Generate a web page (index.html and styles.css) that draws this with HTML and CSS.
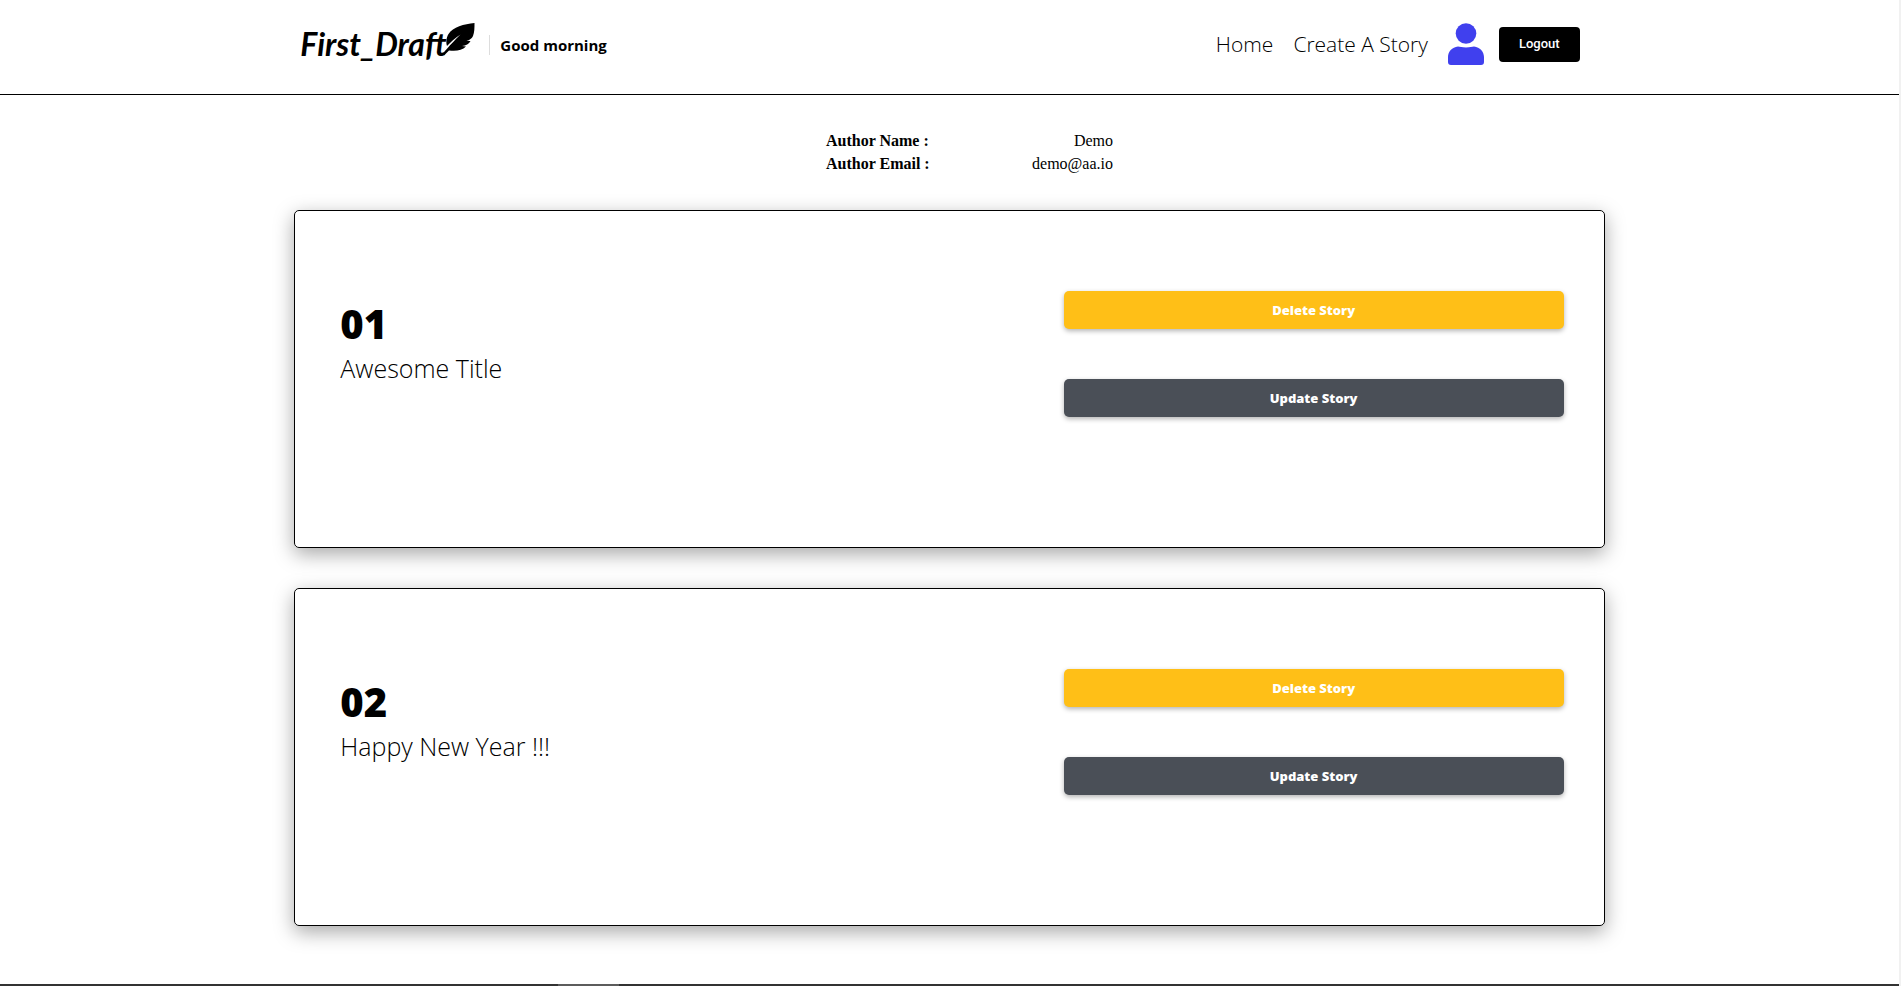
FILE: index.html
```html
<!DOCTYPE html>
<html lang="en">
<head>
  <meta charset="utf-8">
  <meta name="viewport" content="width=device-width, initial-scale=1">
  <title>First_Draft</title>
  <link rel="stylesheet" href="styles.css">
</head>
<body>
  <div class="page">
    <header class="site-header">
      <div class="container bar">
        <div class="brand">
          <a class="logo" href="#"><span class="wordmark">First_Draft</span><svg class="feather" viewBox="0 0 33 33" aria-hidden="true"><path d="M32.500 0C22 1 11 4 6.500 11C4 15 4 20 5 23C9 19 13 15 18.500 11.500C13 17 8 22 0.500 31L2 32.500L7 27.500C14 28.500 20 27.500 24 23.500L20 23C24 22.500 27 21 28.500 18L24.500 18C27.500 17 30 15.500 31 13C32.500 9 32.500 5 32.500 0Z"/></svg></a>
          <span class="greeting">Good morning</span>
        </div>
        <nav class="menu">
          <a class="menu-link" href="#">Home</a>
          <a class="menu-link" href="#">Create A Story</a>
          <a class="profile" href="#" aria-label="Profile"><svg viewBox="0 0 36 42" aria-hidden="true"><circle cx="18" cy="10.500" r="10.300"/><path d="M10 23.500C12 23.500 14 24.500 18 24.500S24 23.500 26 23.500C32 24 36 29 36 34V39Q36 42 33 42H3Q0 42 0 39V34C0 29 4 24 10 23.500Z"/></svg></a>
          <button class="logout" type="button">Logout</button>
        </nav>
      </div>
    </header>
    <main class="container">
      <dl class="author">
        <div class="author-row"><dt>Author Name :</dt><dd>Demo</dd></div>
        <div class="author-row"><dt>Author Email :</dt><dd>demo@aa.io</dd></div>
      </dl>
      <section class="stories">
        <article class="card">
          <div class="story">
            <h2 class="number">01</h2>
            <p class="title">Awesome Title</p>
          </div>
          <div class="actions">
            <button class="btn btn-delete" type="button">Delete Story</button>
            <button class="btn btn-update" type="button">Update Story</button>
          </div>
        </article>
        <article class="card">
          <div class="story">
            <h2 class="number">02</h2>
            <p class="title">Happy New Year !!!</p>
          </div>
          <div class="actions">
            <button class="btn btn-delete" type="button">Delete Story</button>
            <button class="btn btn-update" type="button">Update Story</button>
          </div>
        </article>
      </section>
    </main>
    <div class="edge"></div>
  </div>
</body>
</html>
```
FILE: styles.css
```css
* { box-sizing: border-box; }

body {
  margin: 0;
  background: #fff;
  color: #000;
  font-family: "Open Sans", sans-serif;
}

.page {
  display: flex;
  flex-direction: column;
  min-height: 100vh;
  border-right: 2px solid #f1f1f1;
}

.container {
  width: 69%;
  margin: 0 auto;
}

.site-header { border-bottom: 1px solid #000; }

.bar {
  display: flex;
  justify-content: space-between;
  align-items: center;
  padding: 23px 25px 29px 6px;
}

.brand { display: flex; align-items: center; }

.logo {
  display: flex;
  align-items: flex-start;
  color: #000;
  text-decoration: none;
}

.wordmark {
  width: 142px;
  font: italic 700 32px/42px Lato, sans-serif;
}

.feather { width: 33px; height: 33px; }

.greeting {
  margin: 2px 0 0 14px;
  padding-left: 10px;
  border-left: 1px solid #ddd;
  font-size: 15px;
  font-weight: 700;
  line-height: 20px;
}

.menu { display: flex; align-items: center; }

.menu-link {
  margin-right: 20px;
  color: #000;
  font-size: 21px;
  font-weight: 300;
  line-height: 30px;
  text-decoration: none;
}

.profile { display: flex; margin-right: 15px; }
.profile svg { width: 36px; height: 42px; fill: #4040ee; }

.logout {
  height: 35px;
  padding: 0 20px;
  border: 0;
  border-radius: 4px;
  background: #000;
  color: #fff;
  font: 500 13px/20px Roboto, sans-serif;
}

.author {
  display: grid;
  justify-content: center;
  grid-template-columns: 287px;
  margin: 34px 0 35px;
  padding-left: 40px;
  font: 16px/23px "Liberation Serif", serif;
}

.author-row { display: flex; justify-content: space-between; }
.author dt { font-weight: 700; }
.author dd { margin: 0; }

.stories { display: flex; flex-direction: column; gap: 40px; }

.card {
  display: grid;
  grid-template-columns: 1fr 500px;
  min-height: 338px;
  padding: 80px 40px 0 45px;
  border: 1px solid #000;
  border-radius: 5px;
  box-shadow: 0 6px 20px rgba(0, 0, 0, 0.35);
}

.story { padding-top: 6px; }

.number {
  margin: 0;
  font-size: 40px;
  font-weight: 800;
  line-height: 54px;
}

.title {
  margin: 0;
  font-size: 25px;
  font-weight: 300;
  line-height: 35px;
}

.actions { display: flex; flex-direction: column; gap: 50px; }

.btn {
  height: 38px;
  border: 0;
  border-radius: 5px;
  box-shadow: 0 2px 5px rgba(0, 0, 0, 0.3);
  color: #fff;
  font: 800 13px/20px "Open Sans", sans-serif;
}

.btn-delete { background: #ffbf17; }
.btn-update { background: #4a4f57; }

.edge {
  height: 2px;
  margin-top: auto;
  background: linear-gradient(90deg, #333 558px, #5c5c5c 558px, #5c5c5c 619px, #333 619px);
}
```
